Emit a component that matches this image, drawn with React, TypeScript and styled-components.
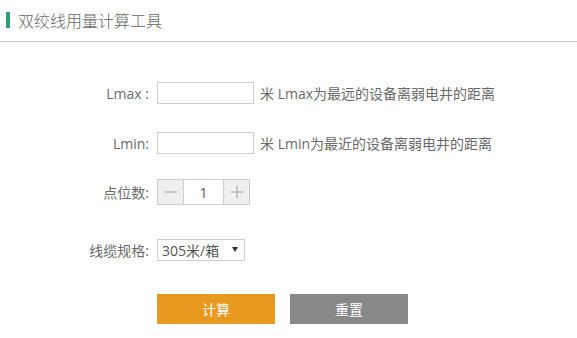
import styled, { createGlobalStyle } from "styled-components";

const GlobalStyle = createGlobalStyle`
  html, body {
    margin: 0;
    padding: 0;
    background: #fff;
  }
  body {
    font-family: "Open Sans", "Noto Sans CJK SC", sans-serif;
    color: #555;
  }
`;

const Page = styled.div`
  width: 577px;
  height: 338px;
  overflow: hidden;
`;

const Header = styled.div`
  height: 41px;
  border-bottom: 1px solid #c9c9c9;
  display: flex;
  align-items: center;
  padding-left: 6px;
  gap: 8px;
`;

const Marker = styled.span`
  width: 4px;
  height: 16px;
  margin-top: -1px;
  background: #2e9e6e;
`;

const Title = styled.h1`
  margin: 0 0 1px;
  font-size: 16px;
  font-weight: 300;
  color: #666;
  font-family: "Noto Sans CJK SC", sans-serif;
  line-height: 1;
`;

const Form = styled.div`
  display: flex;
  flex-direction: column;
`;

const Row = styled.div<{ $top: number }>`
  display: flex;
  align-items: center;
  margin-top: ${(p) => p.$top}px;
  gap: 8px;
  font-size: 14px;
`;

const Label = styled.label`
  width: 149px;
  text-align: right;
  color: #6a6a6a;
  font-family: "Open Sans", "Noto Sans CJK SC", sans-serif;
`;

const TextInput = styled.input`
  box-sizing: border-box;
  width: 97px;
  height: 22px;
  border: 1px solid #cfcfcf;
  outline: none;
  margin: 0;
  padding: 0 4px;
`;

const Hint = styled.span`
  margin-left: -2px;
  color: #6a6a6a;
  font-family: "Open Sans", "Noto Sans CJK SC", sans-serif;
`;

const Stepper = styled.div`
  display: flex;
  height: 26px;
  box-sizing: border-box;
  border: 1px solid #cfcfcf;
`;

const StepButton = styled.button`
  width: 25px;
  height: 100%;
  background: #efefef;
  border: none;
  margin: 0;
  padding: 0;
  display: flex;
  align-items: center;
  justify-content: center;
`;

const StepValue = styled.div`
  box-sizing: border-box;
  width: 41px;
  border-left: 1px solid #cfcfcf;
  border-right: 1px solid #cfcfcf;
  display: flex;
  align-items: center;
  justify-content: center;
  font-size: 14px;
  color: #555;
`;

const Select = styled.div`
  box-sizing: border-box;
  width: 88px;
  height: 22px;
  border: 1px solid #cfcfcf;
  display: flex;
  align-items: center;
  justify-content: space-between;
  padding: 0 6px 0 4px;
  color: #555;
  font-family: "Open Sans", "Noto Sans CJK SC", sans-serif;
`;

const Caret = styled.span`
  width: 0;
  height: 0;
  border-left: 3px solid transparent;
  border-right: 3px solid transparent;
  border-top: 5px solid #333;
  margin-bottom: 2px;
`;

const Actions = styled.div`
  display: flex;
  gap: 15px;
  margin-top: 33px;
  padding-left: 157px;
`;

const ActionButton = styled.button<{ $tone: "primary" | "muted" }>`
  width: 118px;
  height: 30px;
  border: none;
  color: #fff;
  font-size: 14px;
  font-family: "Noto Sans CJK SC", sans-serif;
  background: ${(p) => (p.$tone === "primary" ? "#e8991f" : "#888888")};
`;

function StepIcon({ plus }: { plus?: boolean }) {
  return (
    <svg width="14" height="14" viewBox="0 0 14 14">
      <line x1="1" y1="7" x2="13" y2="7" stroke="#a0a0a0" strokeWidth="1" />
      {plus && <line x1="7" y1="1" x2="7" y2="13" stroke="#a0a0a0" strokeWidth="1" />}
    </svg>
  );
}

export default function App() {
  return (
    <Page>
      <GlobalStyle />
      <Header>
        <Marker />
        <Title>双绞线用量计算工具</Title>
      </Header>
      <Form>
        <Row $top={40}>
          <Label>Lmax :</Label>
          <TextInput />
          <Hint>米 Lmax为最远的设备离弱电井的距离</Hint>
        </Row>
        <Row $top={28}>
          <Label>Lmin:</Label>
          <TextInput />
          <Hint>米 Lmin为最近的设备离弱电井的距离</Hint>
        </Row>
        <Row $top={25}>
          <Label>点位数:</Label>
          <Stepper>
            <StepButton>
              <StepIcon />
            </StepButton>
            <StepValue>1</StepValue>
            <StepButton>
              <StepIcon plus />
            </StepButton>
          </Stepper>
        </Row>
        <Row $top={34}>
          <Label>线缆规格:</Label>
          <Select>
            <span>305米/箱</span>
            <Caret />
          </Select>
        </Row>
        <Actions>
          <ActionButton $tone="primary">计算</ActionButton>
          <ActionButton $tone="muted">重置</ActionButton>
        </Actions>
      </Form>
    </Page>
  );
}
